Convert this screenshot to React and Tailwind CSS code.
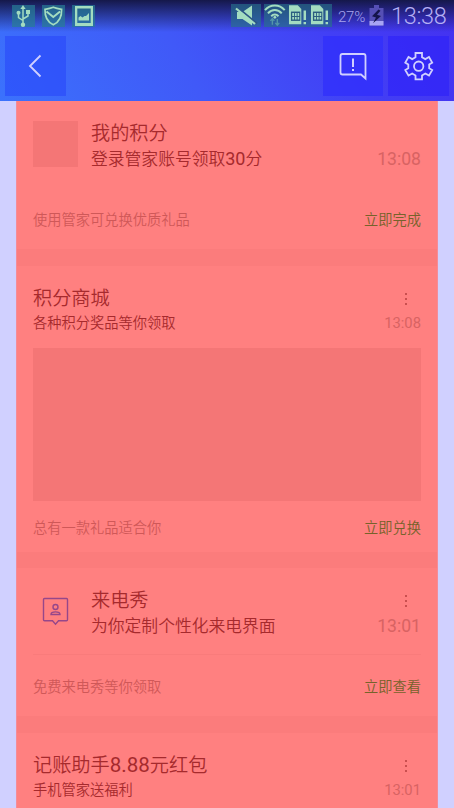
import React from 'react';

const cards = [
  {
    id: 'points',
    title: '我的积分',
    subtitle: '登录管家账号领取30分',
    time: '13:08',
    hint: '使用管家可兑换优质礼品',
    action: '立即完成',
    icon: 'blank',
    menu: false,
  },
  {
    id: 'mall',
    title: '积分商城',
    subtitle: '各种积分奖品等你领取',
    time: '13:08',
    hint: '总有一款礼品适合你',
    action: '立即兑换',
    banner: true,
    menu: true,
  },
  {
    id: 'call',
    title: '来电秀',
    subtitle: '为你定制个性化来电界面',
    time: '13:01',
    hint: '免费来电秀等你领取',
    action: '立即查看',
    icon: 'contact',
    divider: true,
    menu: true,
  },
  {
    id: 'bonus',
    title: '记账助手8.88元红包',
    subtitle: '手机管家送福利',
    time: '13:01',
    banner: true,
    menu: true,
  },
];

function UsbIcon() {
  return (
    <svg width="23" height="22" viewBox="0 0 23 22" fill="none" stroke="#a3dcc0" strokeWidth="1.5">
      <path d="M11 3v16M11 15.5l-4.5-3V8M11 14l5-3V8" />
      <path d="M11 0l2.6 4H8.4z" fill="#a3dcc0" stroke="none" />
      <circle cx="11" cy="19.7" r="2.2" fill="#a3dcc0" stroke="none" />
      <circle cx="6.5" cy="7.8" r="2" fill="#a3dcc0" stroke="none" />
      <path d="M14 5h4v4h-4z" fill="#a3dcc0" stroke="none" />
    </svg>
  );
}

function ShieldIcon() {
  return (
    <svg width="23" height="22" viewBox="0 0 23 22" fill="none" stroke="#a3dcc0" strokeWidth="1.7">
      <path d="M3 4.3C6 3.8 8.8 3.2 11.3 2.2C13.8 3.2 16.6 3.8 19.6 4.3C19.9 12 17.5 17 11.3 19.8C5.1 17 2.7 12 3 4.3z" />
      <path d="M4.5 6.5l6.8 5.5 6.8-5.5" strokeWidth="2" />
    </svg>
  );
}

function PictureIcon() {
  return (
    <svg width="23" height="22" viewBox="0 0 23 22">
      <path d="M3 1h18v20H3zM5.3 3.5v14.500h13.400V3.500z" fill="#a3dcc0" fillRule="evenodd" />
      <path d="M6.500 15.500v-3l2-1.500 2 1.500 2-1.500h1.500l3-3v7.500z" fill="#a3dcc0" />
    </svg>
  );
}

function MuteIcon() {
  return (
    <svg width="30" height="23" viewBox="0 0 30 23">
      <path d="M6 8h5.5L21 1.500v20L11.500 15H6z" fill="#a3dcc0" />
      <path d="M6 3l20 16.500" stroke="#2b5585" strokeWidth="2" />
      <path d="M5 4.500l19 15.500" stroke="#a3dcc0" strokeWidth="2.200" />
    </svg>
  );
}

function WifiIcon() {
  return (
    <svg width="23" height="23" viewBox="0 0 23 23" fill="none" stroke="#a3dcc0" strokeWidth="2">
      <path d="M1 6C6.500-.3 15.500-.3 21 6M4 9.300c4-4.500 10-4.500 14 0M7.300 12.300c2.200-2.300 5.200-2.300 7.400 0" />
      <circle cx="11" cy="13.300" r="1.400" fill="#a3dcc0" stroke="none" />
      <path d="M8.500 21v-6M6.500 17l2-2.300 2 2.300M13.500 15v6M11.500 19l2 2.300 2-2.300" stroke="#5295a8" strokeWidth="1.400" />
    </svg>
  );
}

function SimIcon() {
  return (
    <svg width="23" height="23" viewBox="0 0 23 23">
      <path d="M2 1h9l3.500 4v15.500H2z" fill="#a3dcc0" />
      <path d="M4 7.500h9.500V17H4z" fill="#2b5d80" />
      <path d="M5.300 9h1.800v3H5.300zM8 9h1.800v3H8zM10.700 9h1.700v3h-1.700zM5.300 13h1.800v2.600H5.300zM8 13h1.800v2.600H8zM10.700 13h1.700v2.600h-1.700z" fill="#a3dcc0" />
      <path d="M16.800 6.500h2.500v9.500h-2.500zM16.800 18h2.500v2.500h-2.500z" fill="#a3dcc0" />
    </svg>
  );
}

function BatteryIcon() {
  return (
    <svg width="15" height="21" viewBox="0 0 15 21">
      <path d="M5 0h5v3h4.500v17.500H.5V3H5z" fill="#554fb5" />
      <path d="M.5 16h14v4.500H.5z" fill="#a8a4f4" />
      <path d="M9.500 4.500L3 11.300l4 1.200-3 5.700 8-7.200-4-1.300 3.500-4z" fill="#15154a" />
    </svg>
  );
}

function StatusBar() {
  return (
    <div className="flex h-8 items-start bg-gradient-to-b from-[#15184a] via-[#15184a]/65 via-35% to-transparent">
      <div className="ml-3 mt-[5px] flex gap-[7px]">
        <div className="h-[22px] w-[23px] bg-[#287e96]/70"><UsbIcon /></div>
        <div className="h-[22px] w-[23px] bg-[#287e96]/70"><ShieldIcon /></div>
        <div className="h-[22px] w-[23px] bg-[#287e96]/70"><PictureIcon /></div>
      </div>
      <div className="ml-auto mr-2 mt-1 flex h-[23px]">
        <div className="mr-[3px] w-[30px] bg-[#28728c]/65"><MuteIcon /></div>
        <div className="flex w-[68px] bg-[#28728c]/65">
          <WifiIcon />
          <SimIcon />
          <SimIcon />
        </div>
        <span className="ml-[6px] w-[31px] text-[15px] font-light leading-[26px] tracking-[-0.2px] text-[#a8a4ee]">27%</span>
        <div className="mt-[1px]"><BatteryIcon /></div>
        <span className="ml-[7px] w-[55px] text-[23.5px] font-light leading-[25px] tracking-[-0.3px] text-[#b5b0f5]">13:38</span>
      </div>
    </div>
  );
}

function Header() {
  return (
    <header className="h-[101px] shrink-0 bg-[linear-gradient(60deg,#3b72fc_0%,#4059f8_40%,#423ff5_72%,#4431f0_100%)]">
      <StatusBar />
      <div className="flex pl-[5px] pr-[5px] pt-1">
        <button className="h-[60px] w-[61px] bg-[#2440fa]/50">
          <svg width="61" height="60" viewBox="0 0 61 60" fill="none" stroke="#d0d0ff" strokeWidth="1.8">
            <path d="M35.500 19.500L25 30l10.500 10.500" />
          </svg>
        </button>
        <button className="ml-auto h-[60px] w-[60px] bg-[#2f2dfc]/70">
          <svg width="60" height="60" viewBox="0 0 60 60" fill="none" stroke="#d0d0ff" strokeWidth="1.8">
            <path d="M42.500 42.500V20a2 2 0 0 0-2-2h-21a2 2 0 0 0-2 2v16.500a2 2 0 0 0 2 2h18.500z" />
            <path d="M30 22.500v8.500M30 33v2" strokeWidth="2" />
          </svg>
        </button>
        <button className="ml-[5px] h-[60px] w-[61px] bg-[#2f24f8]/70">
          <svg width="61" height="60" viewBox="0 0 61 60" fill="none" stroke="#d0d0ff" strokeWidth="1.8">
            <path d="M27.500 17h6.500v4.200l3.300 1.900 3.700-2.100 3.200 5.600-3 1.800v3.800l3 1.800-3.200 5.600-3.700-2.100-3.300 1.900v4h-6.500v-4l-3.300-1.900-3.700 2.100-3.200-5.600 3-1.800v-3.800l-3-1.800 3.200-5.600 3.700 2.100 3.300-1.900z" />
            <circle cx="30.700" cy="30.200" r="4.700" />
          </svg>
        </button>
      </div>
    </header>
  );
}

function ContactIcon() {
  return (
    <svg width="45" height="46" viewBox="0 0 45 46" fill="none" stroke="#96478a" strokeWidth="1.4">
      <path d="M11.500 10.500h22a1 1 0 0 1 1 1v20.200a1 1 0 0 1-1 1h-8l-3 3.500-3-3.500h-8a1 1 0 0 1-1-1V11.500a1 1 0 0 1 1-1z" />
      <circle cx="22.500" cy="19" r="2.500" />
      <path d="M18 26.500c0-3.500 9-3.500 9 0z" />
    </svg>
  );
}

function MoreDots() {
  return (
    <div className="mr-[14px] flex flex-col gap-[3px] pt-px">
      <span className="h-[2px] w-[2px] bg-[#c94f4f]" />
      <span className="h-[2px] w-[2px] bg-[#c94f4f]" />
      <span className="h-[2px] w-[2px] bg-[#c94f4f]" />
    </div>
  );
}

// digits are set a touch larger than the Chinese text around them
function Mixed({ text }) {
  return text.split(/([\d.]+)/).map((part, i) => (
    i % 2 ? <span key={i} className="text-[1.07em] font-normal leading-none">{part}</span> : part
  ));
}

function Card({ card }) {
  const big = Boolean(card.icon);
  return (
    <section className={`shrink-0 bg-[#ff8080] px-4 pt-5 ${big ? 'mb-[17px] h-[148px]' : 'mb-4 h-[286px]'}`}>
      <div className="flex">
        {card.icon && (
          <div className={`mr-[13px] h-[46px] w-[45px] shrink-0 ${card.icon === 'blank' ? 'bg-[#f47676]' : ''}`}>
            {card.icon === 'contact' && <ContactIcon />}
          </div>
        )}
        <div className="flex-1">
          <div className="flex h-6 items-center justify-between">
            <h2 className="pt-[2px] text-[19.2px] leading-6 text-[#a62a2d]"><Mixed text={card.title} /></h2>
            {card.menu && <MoreDots />}
          </div>
          <div className={`flex items-center justify-between ${big ? 'mt-[2px] h-6' : 'mt-[3px] h-5'}`}>
            <p className={`pt-px text-[#a62a2d] ${big ? 'text-[16.8px]' : 'text-[14.25px]'}`}><Mixed text={card.subtitle} /></p>
            <span className={`font-normal text-[#d86363] ${big ? 'text-[17.6px]' : 'text-[14.8px]'}`}>{card.time}</span>
          </div>
        </div>
      </div>
      {card.banner && <div className="mt-[15px] h-[153px] w-[388px] bg-[#f47676]" />}
      {card.hint && (
        <div className={`flex h-5 items-center justify-between text-[14.25px] ${big ? 'relative mt-10' : 'mt-[18px]'}`}>
          {card.divider && <div className="absolute -top-6 left-0 h-px w-full bg-[#f97b7b]" />}
          <span className="text-[#cf5858]">{card.hint}</span>
          <span className="text-[#77622b]">{card.action}</span>
        </div>
      )}
    </section>
  );
}

export default function App() {
  return (
    <div className="flex h-[808px] w-[454px] flex-col overflow-hidden bg-[#d0d0ff] font-['Roboto','Noto_Sans_CJK_SC',sans-serif]">
      <Header />
      <main className="ml-4 flex w-[422px] flex-1 flex-col overflow-hidden border-r border-l border-[#f48c98] bg-[#fb7c7c] font-[350]">
        {cards.map(card => (
          <Card key={card.id} card={card} />
        ))}
      </main>
    </div>
  );
}
